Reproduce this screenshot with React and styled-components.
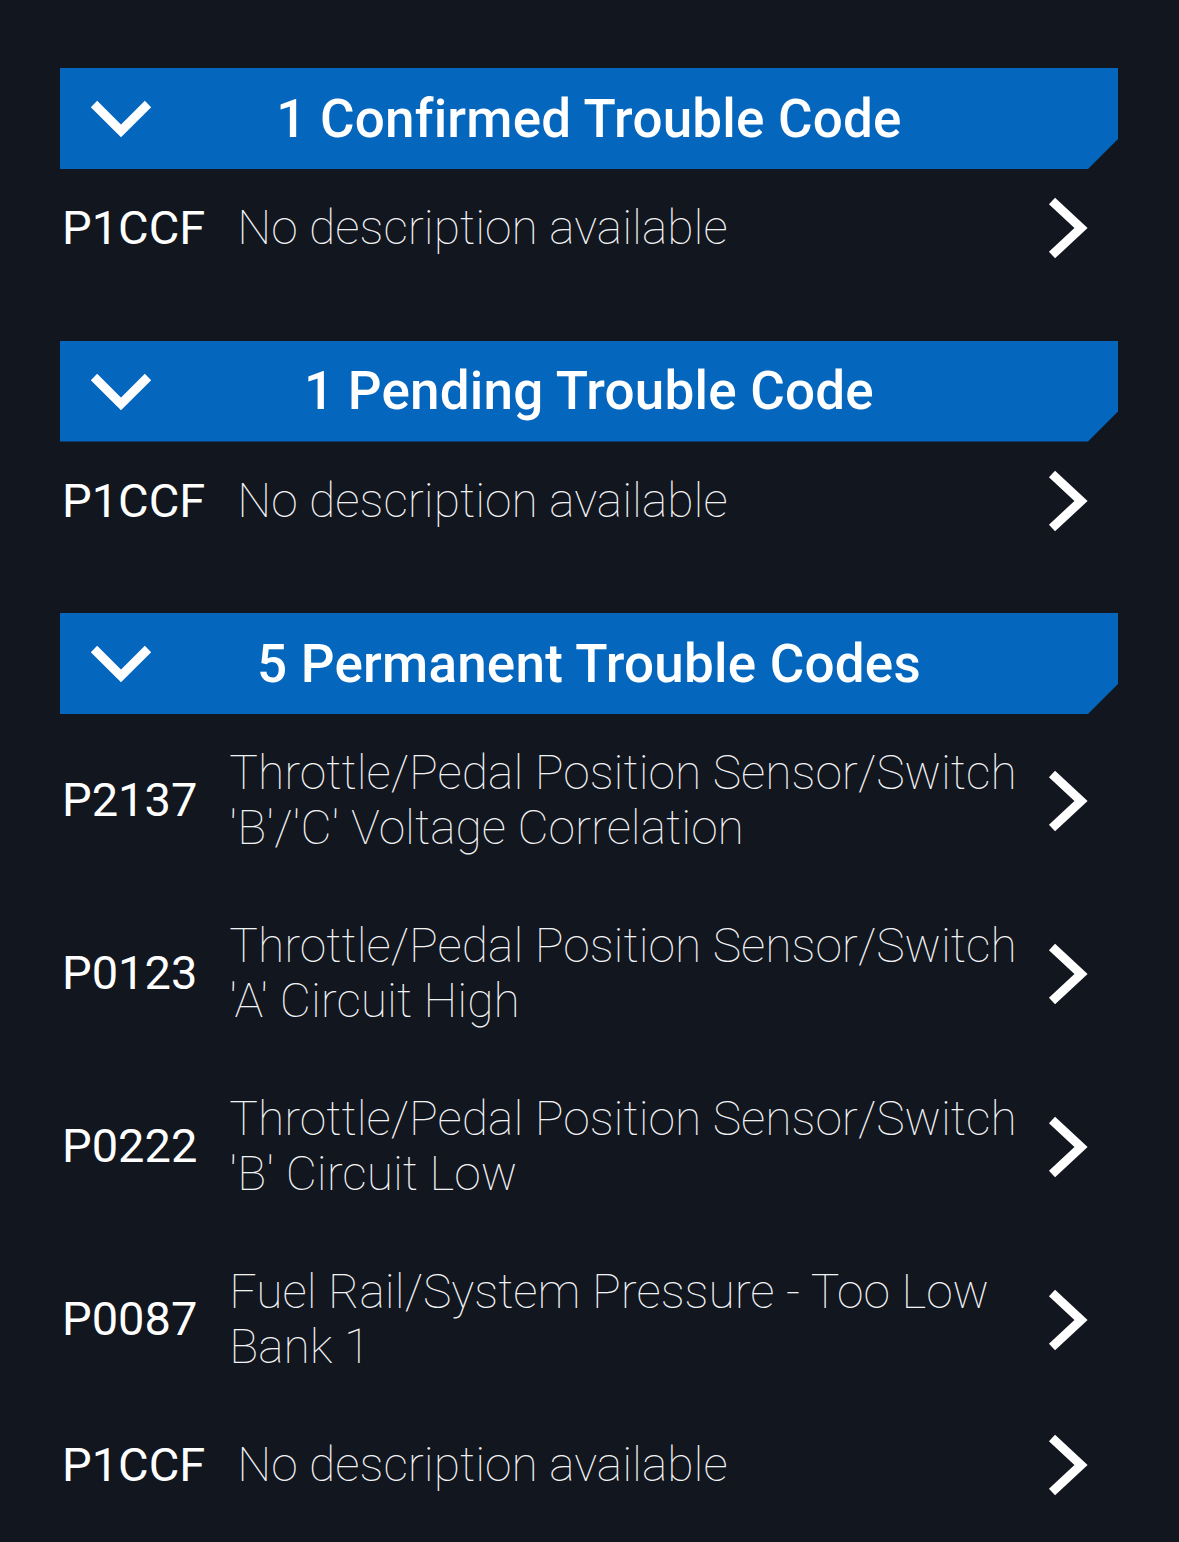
import styled, { createGlobalStyle } from "styled-components";

const GlobalStyle = createGlobalStyle`
  html, body {
    margin: 0;
    padding: 0;
    background: #12161f;
  }
  body {
    font-family: Roboto, "Noto Sans", sans-serif;
    color: #fff;
  }
`;

const Page = styled.div`
  min-height: 1542px;
  background: #12161f;
  padding: 68px 61px 40px 60px;
  box-sizing: border-box;
  display: flex;
  flex-direction: column;
  gap: 53px;
`;

const Section = styled.section`
  display: flex;
  flex-direction: column;
`;

const Header = styled.div`
  height: 101px;
  background: #0566be;
  clip-path: polygon(0 0, 100% 0, 100% calc(100% - 30px), calc(100% - 30px) 100%, 0 100%);
  display: flex;
  align-items: center;
  position: relative;
`;

const Toggle = styled.svg`
  position: absolute;
  left: 30px;
  top: 31px;
`;

const Title = styled.h2`
  flex: 1;
  margin: 0;
  text-align: center;
  font-size: 53px;
  font-weight: 500;
  letter-spacing: 0.2px;
`;

const Row = styled.div`
  display: flex;
  align-items: center;
  padding: 32px 30px 32px 2px;
`;

const Code = styled.span`
  font-size: 47px;
  font-weight: 400;
  line-height: 54.5px;
  margin-right: 32px;
  white-space: nowrap;
`;

const Desc = styled.span`
  flex: 1;
  font-size: 48px;
  font-weight: 100;
  line-height: 54.5px;
  color: #f2f3f5;
  padding-right: 14px;
`;

const Arrow = styled.svg`
  flex: none;
  margin: -4px 0;
`;

const ChevronDown = () => (
  <Toggle width="64" height="40" viewBox="0 0 64 40">
    <polyline points="4,5 31,32 58,5" fill="none" stroke="#fff" strokeWidth="9" />
  </Toggle>
);

const ChevronRight = () => (
  <Arrow width="40" height="62" viewBox="0 0 40 62">
    <polyline points="4,4 33,31 4,58" fill="none" stroke="#fff" strokeWidth="9" />
  </Arrow>
);

const sections = [
  {
    title: "1 Confirmed Trouble Code",
    codes: [["P1CCF", "No description available"]],
  },
  {
    title: "1 Pending Trouble Code",
    codes: [["P1CCF", "No description available"]],
  },
  {
    title: "5 Permanent Trouble Codes",
    codes: [
      ["P2137", "Throttle/Pedal Position Sensor/Switch 'B'/'C' Voltage Correlation"],
      ["P0123", "Throttle/Pedal Position Sensor/Switch 'A' Circuit High"],
      ["P0222", "Throttle/Pedal Position Sensor/Switch 'B' Circuit Low"],
      ["P0087", "Fuel Rail/System Pressure - Too Low Bank 1"],
      ["P1CCF", "No description available"],
    ],
  },
];

export default function App() {
  return (
    <>
      <GlobalStyle />
      <Page>
        {sections.map((s) => (
          <Section key={s.title}>
            <Header>
              <ChevronDown />
              <Title>{s.title}</Title>
            </Header>
            {s.codes.map(([code, desc], i) => (
              <Row key={i}>
                <Code>{code}</Code>
                <Desc>{desc}</Desc>
                <ChevronRight />
              </Row>
            ))}
          </Section>
        ))}
      </Page>
    </>
  );
}
